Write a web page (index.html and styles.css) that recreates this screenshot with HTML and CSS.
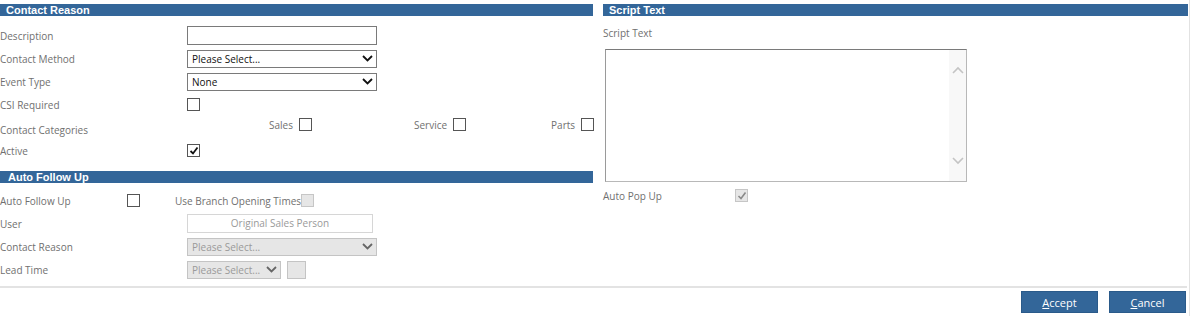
FILE: index.html
```html
<!DOCTYPE html>
<html lang="en">
<head>
    <meta charset="UTF-8">
    <title>Contact Reason</title>
    <link rel="stylesheet" href="styles.css">
</head>
<body>
    <div class="page">
        <div class="columns">
            <!-- Left column -->
            <div class="col-left">
                <div class="bar">Contact Reason</div>
                <div class="form">
                    <div class="row">
                        <label>Description</label>
                        <div class="input"></div>
                    </div>
                    <div class="row">
                        <label>Contact Method</label>
                        <div class="select">
                            <span>Please Select...</span>
                            <svg width="11" height="7" viewBox="0 0 11 7"><path d="M1 1 L5.5 5.5 L10 1" fill="none" stroke="#111" stroke-width="1.8"/></svg>
                        </div>
                    </div>
                    <div class="row">
                        <label>Event Type</label>
                        <div class="select">
                            <span>None</span>
                            <svg width="11" height="7" viewBox="0 0 11 7"><path d="M1 1 L5.5 5.5 L10 1" fill="none" stroke="#111" stroke-width="1.8"/></svg>
                        </div>
                    </div>
                    <div class="row">
                        <label>CSI Required</label>
                        <div class="check"></div>
                    </div>
                    <div class="row">
                        <label class="low">Contact Categories</label>
                        <div class="cats">
                            <div class="cat cat-sales"><span>Sales</span><div class="check"></div></div>
                            <div class="cat cat-service"><span>Service</span><div class="check"></div></div>
                            <div class="cat cat-parts"><span>Parts</span><div class="check"></div></div>
                        </div>
                    </div>
                    <div class="row">
                        <label>Active</label>
                        <div class="check">
                            <svg width="10" height="10" viewBox="0 0 10 10"><path d="M1.5 5 L4 7.5 L8.5 1.5" fill="none" stroke="#111" stroke-width="1.8"/></svg>
                        </div>
                    </div>
                </div>

                <div class="bar bar-second">Auto Follow Up</div>
                <div class="form form-second">
                    <div class="row">
                        <label class="short">Auto Follow Up</label>
                        <div class="check"></div>
                        <span class="branch">Use Branch Opening Times</span>
                        <div class="check disabled"></div>
                    </div>
                    <div class="row">
                        <label>User</label>
                        <div class="input disabled">Original Sales Person</div>
                    </div>
                    <div class="row">
                        <label>Contact Reason</label>
                        <div class="select disabled">
                            <span>Please Select...</span>
                            <svg width="11" height="7" viewBox="0 0 11 7"><path d="M1 1 L5.5 5.5 L10 1" fill="none" stroke="#666" stroke-width="1.8"/></svg>
                        </div>
                    </div>
                    <div class="row">
                        <label>Lead Time</label>
                        <div class="select disabled small">
                            <span>Please Select...</span>
                            <svg width="11" height="7" viewBox="0 0 11 7"><path d="M1 1 L5.5 5.5 L10 1" fill="none" stroke="#666" stroke-width="1.8"/></svg>
                        </div>
                        <div class="tiny-box"></div>
                    </div>
                </div>
            </div>

            <!-- Right column -->
            <div class="col-right">
                <div class="bar">Script Text</div>
                <div class="script-label">Script Text</div>
                <div class="textarea">
                    <div class="scroll">
                        <svg width="12" height="8" viewBox="0 0 12 8"><path d="M1 7 L6 2 L11 7" fill="none" stroke="#c4c4c4" stroke-width="1.6"/></svg>
                        <svg width="12" height="8" viewBox="0 0 12 8"><path d="M1 1 L6 6 L11 1" fill="none" stroke="#c4c4c4" stroke-width="1.6"/></svg>
                    </div>
                </div>
                <div class="popup-row">
                    <label>Auto Pop Up</label>
                    <div class="check disabled">
                        <svg width="10" height="10" viewBox="0 0 10 10"><path d="M1.5 5 L4 7.5 L8.5 1.5" fill="none" stroke="#8a8a8a" stroke-width="1.6"/></svg>
                    </div>
                </div>
            </div>
        </div>

        <div class="footer">
            <button class="btn"><u>A</u>ccept</button>
            <button class="btn"><u>C</u>ancel</button>
        </div>
    </div>
</body>
</html>
```

FILE: styles.css
```css
/* General */
body {
    margin: 0;
    font-family: 'Open Sans', 'Noto Sans', sans-serif;
    font-size: 10px;
    color: #707070;
    background: #fff;
}

.page {
    width: 1190px;
    height: 316px;
    border-right: 1px solid #e2e2e2;
    padding-top: 4px;
    box-sizing: border-box;
}

.columns {
    display: flex;
    gap: 10px;
}

.col-left {
    width: 593px;
}

.col-right {
    width: 585px;
}

/* Section bars */
.bar {
    height: 12px;
    line-height: 12px;
    background: #336699;
    color: #fff;
    font-family: 'Liberation Sans', Arial, sans-serif;
    font-weight: bold;
    font-size: 11px;
    padding-left: 6px;
}

.bar-second {
    margin-top: 9px;
    padding-left: 8px;
}

/* Form rows */
.form {
    padding-top: 8px;
}

.form-second {
    padding-top: 6px;
}

.row {
    display: flex;
    align-items: center;
    height: 23px;
}

.row label {
    width: 187px;
    flex-shrink: 0;
    padding-top: 1px;
}

.row label.low {
    padding-top: 5px;
}

.row label.short {
    width: 127px;
}

.input {
    width: 188px;
    height: 17px;
    border: 1px solid #7a7a7a;
    background: #fff;
}

.input.disabled {
    width: 184px;
    border-color: #d6d6d6;
    color: #9a9a9a;
    text-align: center;
    line-height: 17px;
}

.select {
    width: 181px;
    height: 16px;
    border: 1px solid #7a7a7a;
    display: flex;
    align-items: center;
    justify-content: space-between;
    padding: 0 3px 0 4px;
    color: #111;
}

.select.disabled {
    background: #e6e6e6;
    border-color: #c4c4c4;
    color: #9a9a9a;
}

.select.small {
    width: 85px;
}

.tiny-box {
    width: 17px;
    height: 16px;
    margin-left: 6px;
    background: #e6e6e6;
    border: 1px solid #c4c4c4;
}

/* Checkboxes */
.check {
    width: 11px;
    height: 11px;
    border: 1px solid #555;
    background: #fff;
    display: flex;
    align-items: center;
    justify-content: center;
}

.check.disabled {
    border-color: #c6c6c6;
    background: #e6e6e6;
}

/* Categories */
.cats {
    display: flex;
    align-items: center;
    margin-top: -6px;
}

.cat {
    display: flex;
    align-items: center;
    gap: 6px;
}

.cat span {
    padding-top: 1px;
}

.cat-sales {
    margin-left: 82px;
}

.cat-service {
    margin-left: 102px;
}

.cat-parts {
    margin-left: 85px;
}

/* Auto follow up row */
.branch {
    margin-left: 35px;
    padding-top: 1px;
}

/* Right column */
.script-label {
    padding-top: 10px;
    height: 23px;
}

.textarea {
    width: 360px;
    height: 131px;
    margin-left: 2px;
    border: 1px solid #b8b8b8;
    border-top-color: #7a7a7a;
    border-left-color: #9a9a9a;
    display: flex;
    justify-content: flex-end;
}

.scroll {
    width: 17px;
    background: #f8f8f8;
    display: flex;
    flex-direction: column;
    justify-content: space-between;
    align-items: center;
    padding: 16px 0;
}

.popup-row {
    display: flex;
    align-items: center;
    margin-top: 6px;
}

.popup-row label {
    width: 132px;
    padding-top: 1px;
}

/* Footer */
.footer {
    margin-top: 5px;
    border-top: 2px solid #e3e3e3;
    width: 1187px;
    display: flex;
    justify-content: flex-end;
    gap: 11px;
    padding-top: 3px;
}

.btn {
    width: 77px;
    height: 22px;
    background: #336699;
    color: #fff;
    border: 1px solid #2a5a8a;
    font-family: 'Open Sans', 'Noto Sans', sans-serif;
    font-size: 11px;
    padding: 0;
}

.btn:last-child {
    margin-right: 1px;
}
```
